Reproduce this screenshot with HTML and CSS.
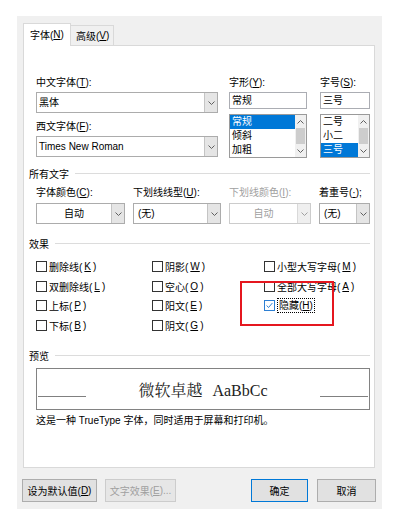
FILE: index.html
```html
<!DOCTYPE html>
<html lang="zh-CN">
<head>
    <meta charset="UTF-8">
    <meta name="viewport" content="width=device-width, initial-scale=1.0">
    <title>字体</title>
    <link rel="stylesheet" href="styles.css">
</head>
<body>
    <div class="dialog">
        <div class="tabs">
            <div class="tab active">字体(<u>N</u>)</div>
            <div class="tab">高级(<u>V</u>)</div>
        </div>

        <div class="panel">
            <!-- 字体 / 字形 / 字号 -->
            <div class="font-row">
                <div class="c1">
                    <label>中文字体(<u>T</u>):</label>
                    <div class="combo">
                        <span class="val">黑体</span>
                        <span class="drop"><svg width="7" height="4" viewBox="0 0 7 4"><path d="M0.5 0.5L3.5 3.5L6.5 0.5" fill="none" stroke="#606060"/></svg></span>
                    </div>
                    <label class="second">西文字体(<u>F</u>):</label>
                    <div class="combo">
                        <span class="val">Times New Roman</span>
                        <span class="drop"><svg width="7" height="4" viewBox="0 0 7 4"><path d="M0.5 0.5L3.5 3.5L6.5 0.5" fill="none" stroke="#606060"/></svg></span>
                    </div>
                </div>
                <div class="c2">
                    <label>字形(<u>Y</u>):</label>
                    <div class="textbox">常规</div>
                    <div class="listbox">
                        <div class="items">
                            <div class="item sel">常规</div>
                            <div class="item">倾斜</div>
                            <div class="item">加粗</div>
                        </div>
                        <div class="scroll">
                            <span class="arr"><svg width="7" height="4" viewBox="0 0 7 4"><path d="M0.5 3.5L3.5 0.5L6.5 3.5" fill="none" stroke="#606060"/></svg></span>
                            <span class="thumb"></span>
                            <span class="arr"><svg width="7" height="4" viewBox="0 0 7 4"><path d="M0.5 0.5L3.5 3.5L6.5 0.5" fill="none" stroke="#606060"/></svg></span>
                        </div>
                    </div>
                </div>
                <div class="c3">
                    <label>字号(<u>S</u>):</label>
                    <div class="textbox">三号</div>
                    <div class="listbox">
                        <div class="items">
                            <div class="item">二号</div>
                            <div class="item">小二</div>
                            <div class="item sel">三号</div>
                        </div>
                        <div class="scroll">
                            <span class="arr"><svg width="7" height="4" viewBox="0 0 7 4"><path d="M0.5 3.5L3.5 0.5L6.5 3.5" fill="none" stroke="#606060"/></svg></span>
                            <span class="thumb"></span>
                            <span class="arr"><svg width="7" height="4" viewBox="0 0 7 4"><path d="M0.5 0.5L3.5 3.5L6.5 0.5" fill="none" stroke="#606060"/></svg></span>
                        </div>
                    </div>
                </div>
            </div>

            <!-- 所有文字 -->
            <div class="heading first"><span>所有文字</span><i></i></div>
            <div class="color-row">
                <div class="f1">
                    <label>字体颜色(<u>C</u>):</label>
                    <div class="combo"><span class="val center">自动</span><span class="drop"><svg width="7" height="4" viewBox="0 0 7 4"><path d="M0.5 0.5L3.5 3.5L6.5 0.5" fill="none" stroke="#606060"/></svg></span></div>
                </div>
                <div class="f2">
                    <label>下划线线型(<u>U</u>):</label>
                    <div class="combo"><span class="val pad">(无)</span><span class="drop"><svg width="7" height="4" viewBox="0 0 7 4"><path d="M0.5 0.5L3.5 3.5L6.5 0.5" fill="none" stroke="#606060"/></svg></span></div>
                </div>
                <div class="f3 disabled">
                    <label>下划线颜色(<u>I</u>):</label>
                    <div class="combo"><span class="val center">自动</span><span class="drop"><svg width="7" height="4" viewBox="0 0 7 4"><path d="M0.5 0.5L3.5 3.5L6.5 0.5" fill="none" stroke="#a0a0a0"/></svg></span></div>
                </div>
                <div class="f4">
                    <label>着重号(<u>·</u>);</label>
                    <div class="combo"><span class="val pad">(无)</span><span class="drop"><svg width="7" height="4" viewBox="0 0 7 4"><path d="M0.5 0.5L3.5 3.5L6.5 0.5" fill="none" stroke="#606060"/></svg></span></div>
                </div>
            </div>

            <!-- 效果 -->
            <div class="heading"><span>效果</span><i></i></div>
            <div class="effects">
                <div class="check"><span class="box"></span>删除线(<u>K</u>)</div>
                <div class="check"><span class="box"></span>双删除线(<u>L</u>)</div>
                <div class="check"><span class="box"></span>上标(<u>P</u>)</div>
                <div class="check"><span class="box"></span>下标(<u>B</u>)</div>
                <div class="check"><span class="box"></span>阴影(<u>W</u>)</div>
                <div class="check"><span class="box"></span>空心(<u>O</u>)</div>
                <div class="check"><span class="box"></span>阳文(<u>E</u>)</div>
                <div class="check"><span class="box"></span>阴文(<u>G</u>)</div>
                <div class="check"><span class="box"></span>小型大写字母(<u>M</u>)</div>
                <div class="check"><span class="box"></span>全部大写字母(<u>A</u>)</div>
                <div class="check"><span class="box checked"><svg width="11" height="11" viewBox="0 0 11 11"><path d="M2 5.5L4.3 8L9 2.5" fill="none" stroke="#2d7fd3" stroke-width="1.2"/></svg></span><span class="focus">隐藏(<u>H</u>)</span></div>
            </div>

            <!-- 预览 -->
            <div class="heading preview-head"><span>预览</span><i></i></div>
            <div class="preview">
                <span class="line left"></span>
                <span class="sample">微软卓越 AaBbCc</span>
                <span class="line right"></span>
            </div>
            <div class="desc">这是一种 TrueType 字体，同时适用于屏幕和打印机。</div>
        </div>

        <div class="footer">
            <div class="btn b1">设为默认值(<u>D</u>)</div>
            <div class="btn b2">文字效果(<u>E</u>)...</div>
            <div class="btn b3">确定</div>
            <div class="btn b4">取消</div>
        </div>
    </div>

    <div class="mark"></div>
</body>
</html>
```

FILE: styles.css
```css
* {
    box-sizing: border-box;
}
body {
    margin: 0;
    width: 393px;
    height: 515px;
    overflow: hidden;
    position: relative;
    background: #fff;
    font-family: "Liberation Sans", "Noto Sans CJK SC", sans-serif;
    font-size: 10px;
    color: #000;
}
u {
    text-underline-offset: 1px;
}
.dialog {
    margin: 16px 0 0 17px;
    width: 365px;
    height: 493px;
    background: #f0f0f0;
    padding: 7px 6px 0 6px;
}

/* tabs */
.tabs {
    display: flex;
    align-items: flex-end;
    height: 22px;
}
.tab {
    height: 20px;
    width: 43px;
    padding-left: 5px;
    display: flex;
    align-items: center;
    border: 1px solid #d9d9d9;
    border-bottom: none;
    border-left: none;
    background: #f0f0f0;
}
.tab.active {
    width: 48px;
    height: 23px;
    margin-bottom: -1px;
    padding-left: 6px;
    padding-bottom: 2px;
    border-left: 1px solid #d9d9d9;
    background: #fff;
    position: relative;
    z-index: 1;
}
.panel {
    width: 352px;
    height: 423px;
    background: #fff;
    border: 1px solid #d9d9d9;
    padding: 30px 4px 0 5px;
}
label {
    display: block;
    height: 14px;
    line-height: 14px;
}

/* font row */
.font-row {
    display: flex;
    margin-left: 7px;
}
.c1 { width: 182px; }
.c2 { width: 78px; margin-left: 11px; }
.c3 { width: 50px; margin-left: 13px; }
.c1 .second {
    margin-top: 7px;
}
.combo {
    height: 21px;
    margin-top: 2px;
    display: flex;
    border: 1px solid #acacac;
    background: #fff;
}
.combo .val {
    flex: 1;
    padding-left: 2px;
    line-height: 19px;
    white-space: nowrap;
    overflow: hidden;
}
.combo .val.center {
    text-align: center;
    padding-left: 0;
}
.combo .val.pad {
    padding-left: 4px;
}
.combo .drop {
    width: 13px;
    background: #e5e5e5;
    border-left: 1px solid #c4c4c4;
    display: flex;
    align-items: center;
    justify-content: center;
}
.textbox {
    height: 17px;
    margin-top: 2px;
    border: 1px solid #abadb3;
    padding-left: 2px;
    line-height: 15px;
}
.listbox {
    height: 44px;
    margin-top: 5px;
    border: 1px solid #9a9a9a;
    display: flex;
}
.listbox .items {
    flex: 1;
}
.item {
    height: 14px;
    line-height: 14px;
    padding-left: 2px;
}
.item.sel {
    background: #0078d7;
    color: #fff;
}
.scroll {
    width: 11px;
    background: #f0f0f0;
    display: flex;
    flex-direction: column;
}
.scroll .arr {
    height: 13px;
    display: flex;
    align-items: center;
    justify-content: center;
}
.scroll .thumb {
    flex: 1;
    margin: 0 1px;
    background: #cdcdcd;
}

/* section headings */
.heading {
    display: flex;
    align-items: center;
    height: 14px;
    margin-top: 12px;
}
.heading.first {
    margin-top: 8px;
}
.heading i {
    flex: 1;
    height: 1px;
    background: #dcdcdc;
    margin-left: 6px;
}

/* color row */
.color-row {
    display: flex;
    gap: 8px;
    margin: 6px 0 0 7px;
}
.color-row .combo {
    margin-top: 3px;
}
.f1 { width: 89px; }
.f2 { width: 88px; }
.f3 { width: 82px; }
.f4 { width: 51px; }
.disabled {
    color: #a0a0a0;
}
.disabled .combo {
    border-color: #cccccc;
}
.disabled .drop {
    background: #efefef;
    border-left-color: #d9d9d9;
}

/* effects */
.effects {
    display: grid;
    grid-template-columns: 116px 112px 1fr;
    grid-template-rows: repeat(4, 19.5px);
    grid-auto-flow: column;
    margin: 7px 0 0 7px;
}
.check {
    display: flex;
    align-items: center;
    gap: 2px;
}
.box {
    width: 11px;
    height: 11px;
    border: 1px solid #333;
    background: #fff;
    display: flex;
    align-items: center;
    justify-content: center;
}
.box.checked {
    border-color: #2d7fd3;
}
.focus {
    border: 1px dotted #000;
    padding: 0 1px;
    line-height: 13px;
}

/* preview */
.preview-head {
    margin-top: 13px;
}
.preview {
    height: 42px;
    width: 334px;
    margin: 6px 0 0 7px;
    border: 1px solid #828282;
    display: flex;
    align-items: flex-start;
}
.preview .line {
    width: 48px;
    height: 1px;
    margin-top: 27px;
    background: #808080;
}
.preview .left { margin-left: 1px; }
.preview .right { margin-right: 1px; }
.sample {
    flex: 1;
    text-align: center;
    font-family: "Liberation Serif", "Noto Serif CJK SC", "Noto Sans CJK SC", serif;
    font-size: 16px;
    line-height: 20px;
    margin-top: 12px;
    color: #222;
    word-spacing: 6px;
}
.desc {
    margin: 4px 0 0 7px;
    line-height: 14px;
}

/* buttons */
.footer {
    display: flex;
    width: 354px;
    margin: 11px 0 0 -1px;
}
.btn {
    height: 23px;
    display: flex;
    align-items: center;
    justify-content: center;
    border: 1px solid #adadad;
    background: #e1e1e1;
}
.b1 { width: 75px; }
.b2 {
    width: 71px;
    margin-left: 8px;
    color: #a0a0a0;
    border-color: #cccccc;
    background: #e6e6e6;
}
.b3 {
    width: 57px;
    margin-left: auto;
    border-color: #0078d7;
}
.b4 {
    width: 59px;
    margin-left: 9px;
}

/* red annotation over the checkbox */
.mark {
    position: absolute;
    left: 240px;
    top: 281px;
    width: 94px;
    height: 45px;
    border: 2px solid #e5171f;
}
```
